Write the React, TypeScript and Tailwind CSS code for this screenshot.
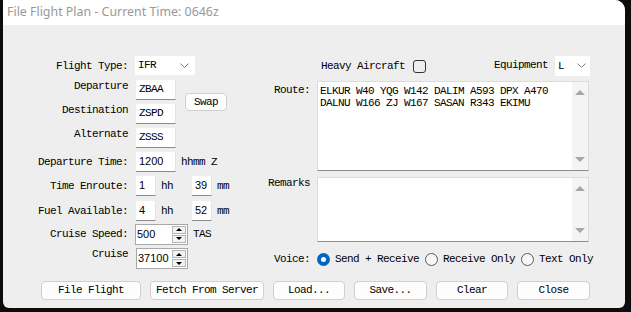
const mono = "font-['Liberation_Mono',monospace] text-[11px] tracking-[-0.6px] text-black whitespace-nowrap";
const sans = "font-['Liberation_Sans',Arial,sans-serif] text-[11px] text-black whitespace-nowrap";

function Chevron() {
  return (
    <svg width="9" height="6" viewBox="0 0 9 6" className="shrink-0">
      <polyline points="0.5,0.5 4.5,4.5 8.5,0.5" fill="none" stroke="#7a7a7a" strokeWidth="1" />
    </svg>
  );
}

function Field({ value, w, font = mono }: { value: string; w: string; font?: string }) {
  return (
    <div className={`${w} h-[20px] shrink-0 bg-white border-b border-[#8c8c8c] border-r border-r-[#e4e4e4] flex items-center pl-[3px] ${font}`}>
      {value}
    </div>
  );
}

function Spinner({ value, w }: { value: string; w: string }) {
  return (
    <div className={`${w} h-[21px] shrink-0 bg-white border border-[#a8a8a8] flex`}>
      <div className={`flex-1 flex items-center pl-[1px] ${sans}`}>{value}</div>
      <div className="w-[15px] flex flex-col gap-[1px] p-[1px] pl-0">
        <div className="flex-1 border border-[#b4b4b4] bg-[#f3f3f3] flex items-center justify-center">
          <div className="w-0 h-0 border-l-[3px] border-r-[3px] border-b-[3px] border-l-transparent border-r-transparent border-b-black" />
        </div>
        <div className="flex-1 border border-[#b4b4b4] bg-[#f3f3f3] flex items-center justify-center">
          <div className="w-0 h-0 border-l-[3px] border-r-[3px] border-t-[3px] border-l-transparent border-r-transparent border-t-black" />
        </div>
      </div>
    </div>
  );
}

function TextBox({ h, lines }: { h: string; lines: string[] }) {
  return (
    <div className={`w-[272px] ${h} shrink-0 bg-white border border-[#dcdcdc] border-b-[#8c8c8c] flex`}>
      <div className={`flex-1 pl-[2px] pt-[3px] leading-[12px] ${mono}`}>
        {lines.map((l) => (
          <div key={l}>{l}</div>
        ))}
      </div>
      <div className="w-[16px] bg-[#f4f4f4] flex flex-col items-center justify-between py-[8px]">
        <div className="w-0 h-0 border-l-[5px] border-r-[5px] border-b-[5px] border-l-transparent border-r-transparent border-b-[#a6a6a6]" />
        <div className="w-0 h-0 border-l-[5px] border-r-[5px] border-t-[5px] border-l-transparent border-r-transparent border-t-[#a6a6a6]" />
      </div>
    </div>
  );
}

function Radio({ checked, label }: { checked?: boolean; label: string }) {
  return (
    <div className="flex items-center gap-[5px] shrink-0">
      {checked ? (
        <div className="w-[13px] h-[13px] rounded-full bg-[#0067c0] flex items-center justify-center">
          <div className="w-[5px] h-[5px] rounded-full bg-white" />
        </div>
      ) : (
        <div className="w-[13px] h-[13px] rounded-full border border-[#5a5a5a] bg-[#f6f6f6]" />
      )}
      <span className={mono}>{label}</span>
    </div>
  );
}

function Btn({ label, w }: { label: string; w: string }) {
  return (
    <div className={`${w} h-[19px] shrink-0 bg-[#fdfdfd] border border-[#d0d0d0] rounded-[4px] flex items-center justify-center ${mono}`}>
      {label}
    </div>
  );
}

function Label({ text, top }: { text: string; top?: boolean }) {
  return (
    <div className={`w-[125px] shrink-0 text-right leading-[12px] ${top ? "self-start" : ""} ${mono}`}>{text}</div>
  );
}

export default function App() {
  return (
    <div className="w-[631px] h-[312px] bg-[#0c0c0c] overflow-hidden">
      <div className="ml-[3px] w-[622px] h-[308px] flex flex-col bg-[#eeeeee] rounded-tr-[10px] rounded-b-[6px] overflow-hidden">
        <div className="h-[25px] bg-white flex items-center pl-[4px] font-['Noto_Sans',sans-serif] text-[12.4px] text-[#999999]">
          File Flight Plan - Current Time: 0646z
        </div>

        <div className="h-[256px] flex pt-[31px]">
          {/* left column */}
          <div className="w-[257px] shrink-0 flex flex-col">
            <div className="h-[19px] flex items-center gap-[7px]">
              <Label text="Flight Type:" />
              <div className={`w-[60px] h-[19px] bg-white flex items-center justify-between pl-[3px] pr-[6px] ${mono}`}>
                IFR
                <Chevron />
              </div>
            </div>

            <div className="mt-[5px] flex items-center">
              <div className="flex flex-col gap-[4px]">
                <div className="h-[20px] flex gap-[8px]">
                  <Label text="Departure" top />
                  <Field value="ZBAA" w="w-[40px]" />
                </div>
                <div className="h-[20px] flex gap-[8px]">
                  <Label text="Destination" top />
                  <Field value="ZSPD" w="w-[40px]" />
                </div>
              </div>
              <div className={`ml-[9px] w-[42px] h-[18px] bg-[#fdfdfd] border border-[#d0d0d0] rounded-[4px] flex items-center justify-center ${mono}`}>
                Swap
              </div>
            </div>

            <div className="mt-[4px] h-[20px] flex gap-[8px]">
              <Label text="Alternate" top />
              <Field value="ZSSS" w="w-[40px]" />
            </div>

            <div className="mt-[4px] h-[20px] flex items-center gap-[8px]">
              <Label text="Departure Time:" />
              <Field value="1200" w="w-[40px]" font={sans} />
              <span className={`ml-[-3px] ${mono}`}>hhmm Z</span>
            </div>

            <div className="mt-[4px] h-[20px] flex items-center gap-[8px]">
              <Label text="Time Enroute:" />
              <Field value="1" w="w-[20px]" font={sans} />
              <span className={`ml-[-3px] w-[23px] ${mono}`}>hh</span>
              <Field value="39" w="w-[20px]" font={sans} />
              <span className={`ml-[-3px] ${mono}`}>mm</span>
            </div>

            <div className="mt-[5px] h-[20px] flex items-center gap-[8px]">
              <Label text="Fuel Available:" />
              <Field value="4" w="w-[20px]" font={sans} />
              <span className={`ml-[-3px] w-[23px] ${mono}`}>hh</span>
              <Field value="52" w="w-[20px]" font={sans} />
              <span className={`ml-[-3px] ${mono}`}>mm</span>
            </div>

            <div className="mt-[2px] h-[22px] flex items-center gap-[7px]">
              <Label text="Cruise Speed:" />
              <Spinner value="500" w="w-[53px]" />
              <span className={`ml-[-2px] ${mono}`}>TAS</span>
            </div>

            <div className="mt-[3px] h-[21px] flex gap-[8px]">
              <Label text="Cruise" top />
              <Spinner value="37100" w="w-[52px]" />
            </div>
          </div>

          {/* right column */}
          <div className="w-[340px] shrink-0 flex flex-col">
            <div className="h-[20px] flex items-center">
              <span className={`ml-[61px] ${mono}`}>Heavy Aircraft</span>
              <div className="ml-[8px] w-[13px] h-[13px] shrink-0 rounded-[3px] border border-[#333333]" />
              <span className={`ml-[68px] self-start mt-[1px] ${mono}`}>Equipment</span>
              <div className={`ml-[7px] w-[35px] h-[20px] shrink-0 bg-white flex items-center justify-between pl-[3px] pr-[4px] ${mono}`}>
                L
                <Chevron />
              </div>
            </div>

            <div className="mt-[5px] flex gap-[7px]">
              <div className={`w-[50px] shrink-0 text-right pt-[3px] leading-[12px] ${mono}`}>Route:</div>
              <TextBox
                h="h-[90px]"
                lines={["ELKUR W40 YQG W142 DALIM A593 DPX A470", "DALNU W166 ZJ W167 SASAN R343 EKIMU"]}
              />
            </div>

            <div className="mt-[6px] flex gap-[7px]">
              <div className={`w-[50px] shrink-0 text-right leading-[12px] ${mono}`}>Remarks</div>
              <TextBox h="h-[65px]" lines={[]} />
            </div>

            <div className="mt-[8px] h-[18px] flex items-center gap-[7px]">
              <div className={`w-[50px] shrink-0 text-right ${mono}`}>Voice:</div>
              <div className="flex items-center gap-[6px]">
                <Radio checked label="Send + Receive" />
                <Radio label="Receive Only" />
                <Radio label="Text Only" />
              </div>
            </div>
          </div>
        </div>

        <div className="flex gap-[9px] pl-[38px]">
          <Btn label="File Flight" w="w-[100px]" />
          <Btn label="Fetch From Server" w="w-[114px]" />
          <Btn label="Load..." w="w-[72px]" />
          <Btn label="Save..." w="w-[73px]" />
          <Btn label="Clear" w="w-[72px]" />
          <Btn label="Close" w="w-[73px]" />
        </div>
      </div>
    </div>
  );
}
